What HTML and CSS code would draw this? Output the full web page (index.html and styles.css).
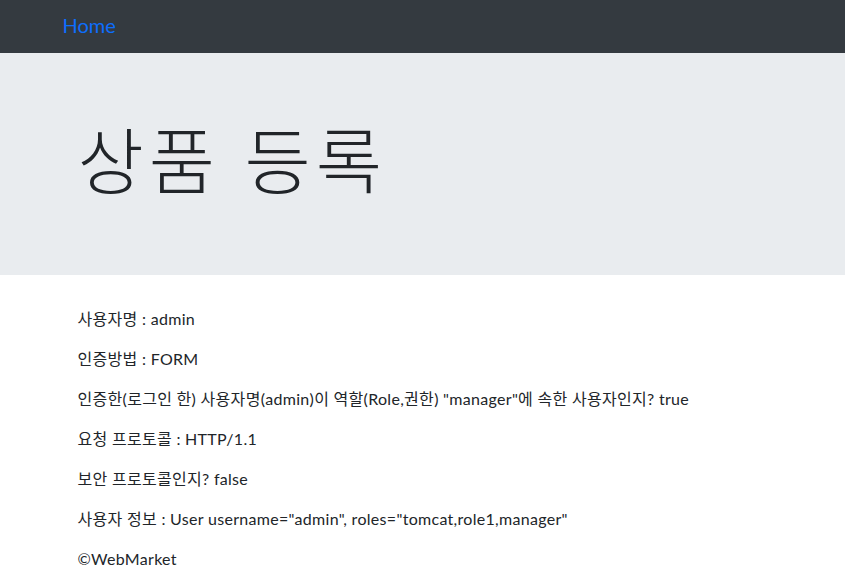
FILE: index.html
```html
<!DOCTYPE html>
<html lang="ko">
<head>
  <meta charset="UTF-8" />
  <title>상품 등록</title>
  <link rel="stylesheet" href="styles.css">
</head>
<body>

  <nav class="navbar">
    <div class="container nav-inner">
      <a class="navbar-brand" href="#">Home</a>
    </div>
  </nav>

  <div class="jumbotron">
    <div class="container">
      <h1 class="display-3">상품 등록</h1>
    </div>
  </div>

  <div class="container">
    <p>사용자명 : admin</p>
    <p>인증방법 : FORM</p>
    <p>인증한(로그인 한) 사용자명(admin)이 역할(Role,권한) "manager"에 속한 사용자인지? true</p>
    <p>요청 프로토콜 : HTTP/1.1</p>
    <p>보안 프로토콜인지? false</p>
    <p>사용자 정보 : User username="admin", roles="tomcat,role1,manager"</p>
  </div>

  <footer class="container">
    <p>&copy;WebMarket</p>
  </footer>

</body>
</html>
```

FILE: styles.css
```css
* {
  box-sizing: border-box;
}
body {
  margin: 0;
  font-family: "Segoe UI", Lato, "Noto Sans CJK KR", sans-serif;
  font-size: 16px;
  line-height: 1.5;
  color: #212529;
  background-color: #fff;
}
.container {
  max-width: 720px;
  margin: 0 auto;
  padding: 0 15px;
}
.navbar {
  background-color: #343a40;
  height: 53px;
  padding-bottom: 4px;
  display: flex;
  align-items: center;
}
.nav-inner {
  width: 720px;
  padding: 0;
}
.navbar-brand {
  font-size: 20px;
  color: #0d6efd;
  text-decoration: none;
}
.jumbotron {
  background-color: #e9ecef;
  padding: 64px 0;
  margin-bottom: 32px;
}
.display-3 {
  font-size: 72px;
  font-weight: 300;
  line-height: 1.2;
  letter-spacing: 5px;
  margin: 0 0 8px;
}
p {
  margin: 0 0 16px;
  letter-spacing: 0.3px;
}
```
